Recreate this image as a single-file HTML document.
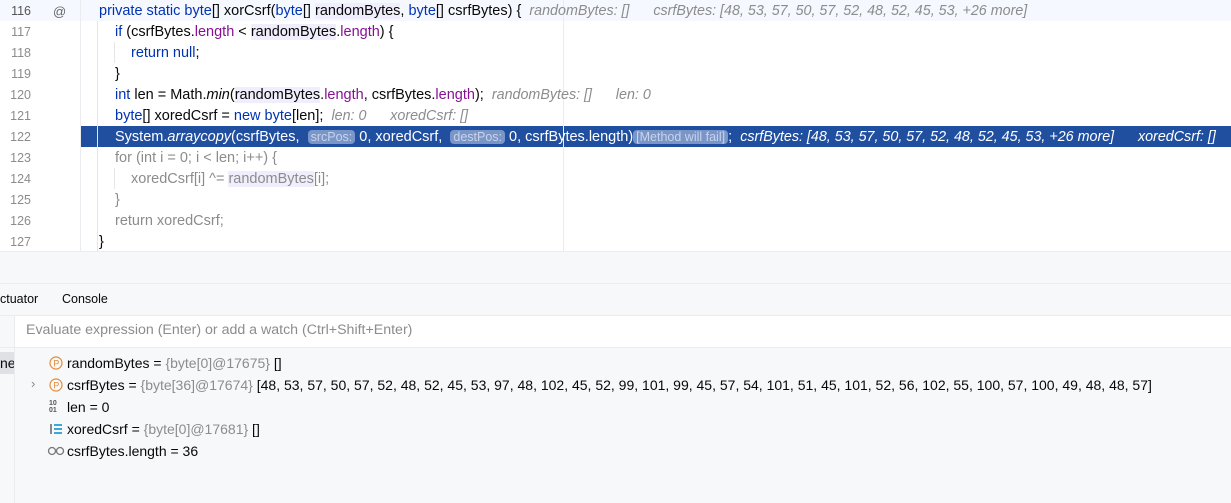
<!DOCTYPE html>
<html><head><meta charset="utf-8"><style>
body{margin:0;width:1231px;height:503px;overflow:hidden;background:#fff;font-family:"Liberation Sans",sans-serif;font-size:14.5px;color:#080808;position:relative}
.r{position:absolute;left:0;width:1231px;height:21px;line-height:21px;white-space:pre}
.ln{position:absolute;left:0;width:31px;text-align:right;color:#8c8c8c;font-size:12.5px}
.c{position:absolute;left:99px}
.k{color:#0033b3}.f{color:#871094}.m{font-style:italic}
.u{background:#f0eefc}
.hint{font-style:italic;color:#8c8c8c;font-size:14.3px}
.sel .c,.sel .c span{color:#fff}
.sel .hint{color:#dfe6f5}
.pill{background:#7a95c8;color:#c9d4ea!important;border-radius:4px;padding:0 3px;font-size:12.5px}
.vr{position:absolute;left:0;height:22px;line-height:22px;white-space:pre;font-size:14px}
.gr{color:#8c8c8c}
</style></head><body>
<div style="position:absolute;left:0;top:0;width:1231px;height:21px;background:#f5f8fe"></div>
<div style="position:absolute;left:81px;top:126px;width:1150px;height:21px;background:#214fa0"></div>
<div style="position:absolute;left:80px;top:0;width:1px;height:251px;background:#ebecf0"></div>
<div style="position:absolute;left:563px;top:0;width:1px;height:251px;background:#ebecf0"></div>
<div style="position:absolute;left:97px;top:21px;width:1px;height:231px;background:#e6e6e6"></div>
<div style="position:absolute;left:114px;top:42px;width:1px;height:21px;background:#e6e6e6"></div>
<div style="position:absolute;left:114px;top:168px;width:1px;height:21px;background:#e6e6e6"></div>

<div class="r" style="top:1px"><span class="ln" style="color:#555">116</span><span style="position:absolute;left:53px;color:#666;font-size:13px">@</span><span class="c"><span class="k">private static byte</span>[] xorCsrf(<span class="k">byte</span>[] <span class="u">randomBytes</span>, <span class="k">byte</span>[] csrfBytes) {  <span class="hint">randomBytes: []      csrfBytes: [48, 53, 57, 50, 57, 52, 48, 52, 45, 53, +26 more]</span></span></div>
<div class="r" style="top:22px"><span class="ln">117</span><span class="c" style="left:115px"><span class="k">if</span> (csrfBytes.<span class="f">length</span> &lt; <span class="u">randomBytes</span>.<span class="f">length</span>) {</span></div>
<div class="r" style="top:43px"><span class="ln">118</span><span class="c" style="left:131px"><span class="k">return null</span>;</span></div>
<div class="r" style="top:64px"><span class="ln">119</span><span class="c" style="left:115px">}</span></div>
<div class="r" style="top:85px"><span class="ln">120</span><span class="c" style="left:115px"><span class="k">int</span> len = Math.<span class="m">min</span>(<span class="u">randomBytes</span>.<span class="f">length</span>, csrfBytes.<span class="f">length</span>);  <span class="hint">randomBytes: []      len: 0</span></span></div>
<div class="r" style="top:106px"><span class="ln">121</span><span class="c" style="left:115px"><span class="k">byte</span>[] xoredCsrf = <span class="k">new byte</span>[len];  <span class="hint">len: 0      xoredCsrf: []</span></span></div>
<div class="r sel" style="top:127px"><span class="ln">122</span><span class="c" style="left:115px">System.<span class="m">arraycopy</span>(csrfBytes,  <span class="pill">srcPos:</span> 0, xoredCsrf,  <span class="pill">destPos:</span> 0, csrfBytes.length)<span class="pill">[Method will fail]</span>;  <span class="hint">csrfBytes: [48, 53, 57, 50, 57, 52, 48, 52, 45, 53, +26 more]      xoredCsrf: []</span></span></div>
<div class="r" style="top:148px;color:#8c8c8c"><span class="ln">123</span><span class="c gr" style="left:115px">for (int i = 0; i &lt; len; i++) {</span></div>
<div class="r" style="top:169px"><span class="ln">124</span><span class="c gr" style="left:131px">xoredCsrf[i] ^= <span class="u">randomBytes</span>[i];</span></div>
<div class="r" style="top:190px"><span class="ln">125</span><span class="c gr" style="left:115px">}</span></div>
<div class="r" style="top:211px"><span class="ln">126</span><span class="c gr" style="left:115px">return xoredCsrf;</span></div>
<div class="r" style="top:232px"><span class="ln">127</span><span class="c">}</span></div>

<div style="position:absolute;left:0;top:251px;width:1231px;height:252px;background:#f7f8fa"></div>
<div style="position:absolute;left:0;top:251px;width:1231px;height:1px;background:#ebecf0"></div>
<div style="position:absolute;left:0;top:283px;width:1231px;height:1px;background:#ebecf0"></div>
<div style="position:absolute;left:0;top:290px;font-size:12.5px;line-height:19px">ctuator</div>
<div style="position:absolute;left:62px;top:290px;font-size:12.5px;line-height:19px">Console</div>
<div style="position:absolute;left:0;top:315px;width:1231px;height:1px;background:#ebecf0"></div>
<div style="position:absolute;left:15px;top:316px;width:1216px;height:31px;background:#fff"></div>
<div style="position:absolute;left:26px;top:321px;line-height:19px;color:#8c8c8c;font-size:14.2px">Evaluate expression (Enter) or add a watch (Ctrl+Shift+Enter)</div>
<div style="position:absolute;left:0;top:347px;width:1231px;height:1px;background:#ebecf0"></div>
<div style="position:absolute;left:14px;top:316px;width:1px;height:187px;background:#ebecf0"></div>
<div style="position:absolute;left:0;top:352px;width:14px;height:22px;background:#dfe1e5"></div>
<div style="position:absolute;left:0;top:352px;line-height:22px;width:14px;overflow:hidden;font-size:14px">ne</div>

<svg style="position:absolute;left:49px;top:356px" width="14" height="14"><circle cx="7" cy="7" r="6" fill="none" stroke="#e08d3c" stroke-width="1.2"/><text x="4.3" y="10.5" font-size="9" fill="#e08d3c" font-family="Liberation Sans">P</text></svg>
<div class="vr" style="left:67px;top:352px">randomBytes = <span class="gr">{byte[0]@17675}</span> []</div>
<div style="position:absolute;left:31px;top:376px;color:#888;font-size:13px">&#x203A;</div>
<svg style="position:absolute;left:49px;top:378px" width="14" height="14"><circle cx="7" cy="7" r="6" fill="none" stroke="#e08d3c" stroke-width="1.2"/><text x="4.3" y="10.5" font-size="9" fill="#e08d3c" font-family="Liberation Sans">P</text></svg>
<div class="vr" style="left:67px;top:374px">csrfBytes = <span class="gr">{byte[36]@17674}</span> [48, 53, 57, 50, 57, 52, 48, 52, 45, 53, 97, 48, 102, 45, 52, 99, 101, 99, 45, 57, 54, 101, 51, 45, 101, 52, 56, 102, 55, 100, 57, 100, 49, 48, 48, 57]</div>
<div style="position:absolute;left:49px;top:400px;font-size:7px;line-height:7px;color:#555;font-weight:bold">10<br>01</div>
<div class="vr" style="left:67px;top:396px">len = 0</div>
<svg style="position:absolute;left:49px;top:422px" width="14" height="14"><rect x="5" y="2" width="8" height="2" fill="#3fa7d6"/><rect x="5" y="6" width="8" height="2" fill="#3fa7d6"/><rect x="5" y="10" width="8" height="2" fill="#3fa7d6"/><rect x="1" y="2" width="2" height="10" fill="#888"/></svg>
<div class="vr" style="left:67px;top:418px">xoredCsrf = <span class="gr">{byte[0]@17681}</span> []</div>
<svg style="position:absolute;left:47px;top:445px" width="18" height="12"><circle cx="5" cy="6" r="3.5" fill="none" stroke="#777" stroke-width="1.3"/><circle cx="13" cy="6" r="3.5" fill="none" stroke="#777" stroke-width="1.3"/></svg>
<div class="vr" style="left:67px;top:440px">csrfBytes.length = 36</div>
</body></html>
